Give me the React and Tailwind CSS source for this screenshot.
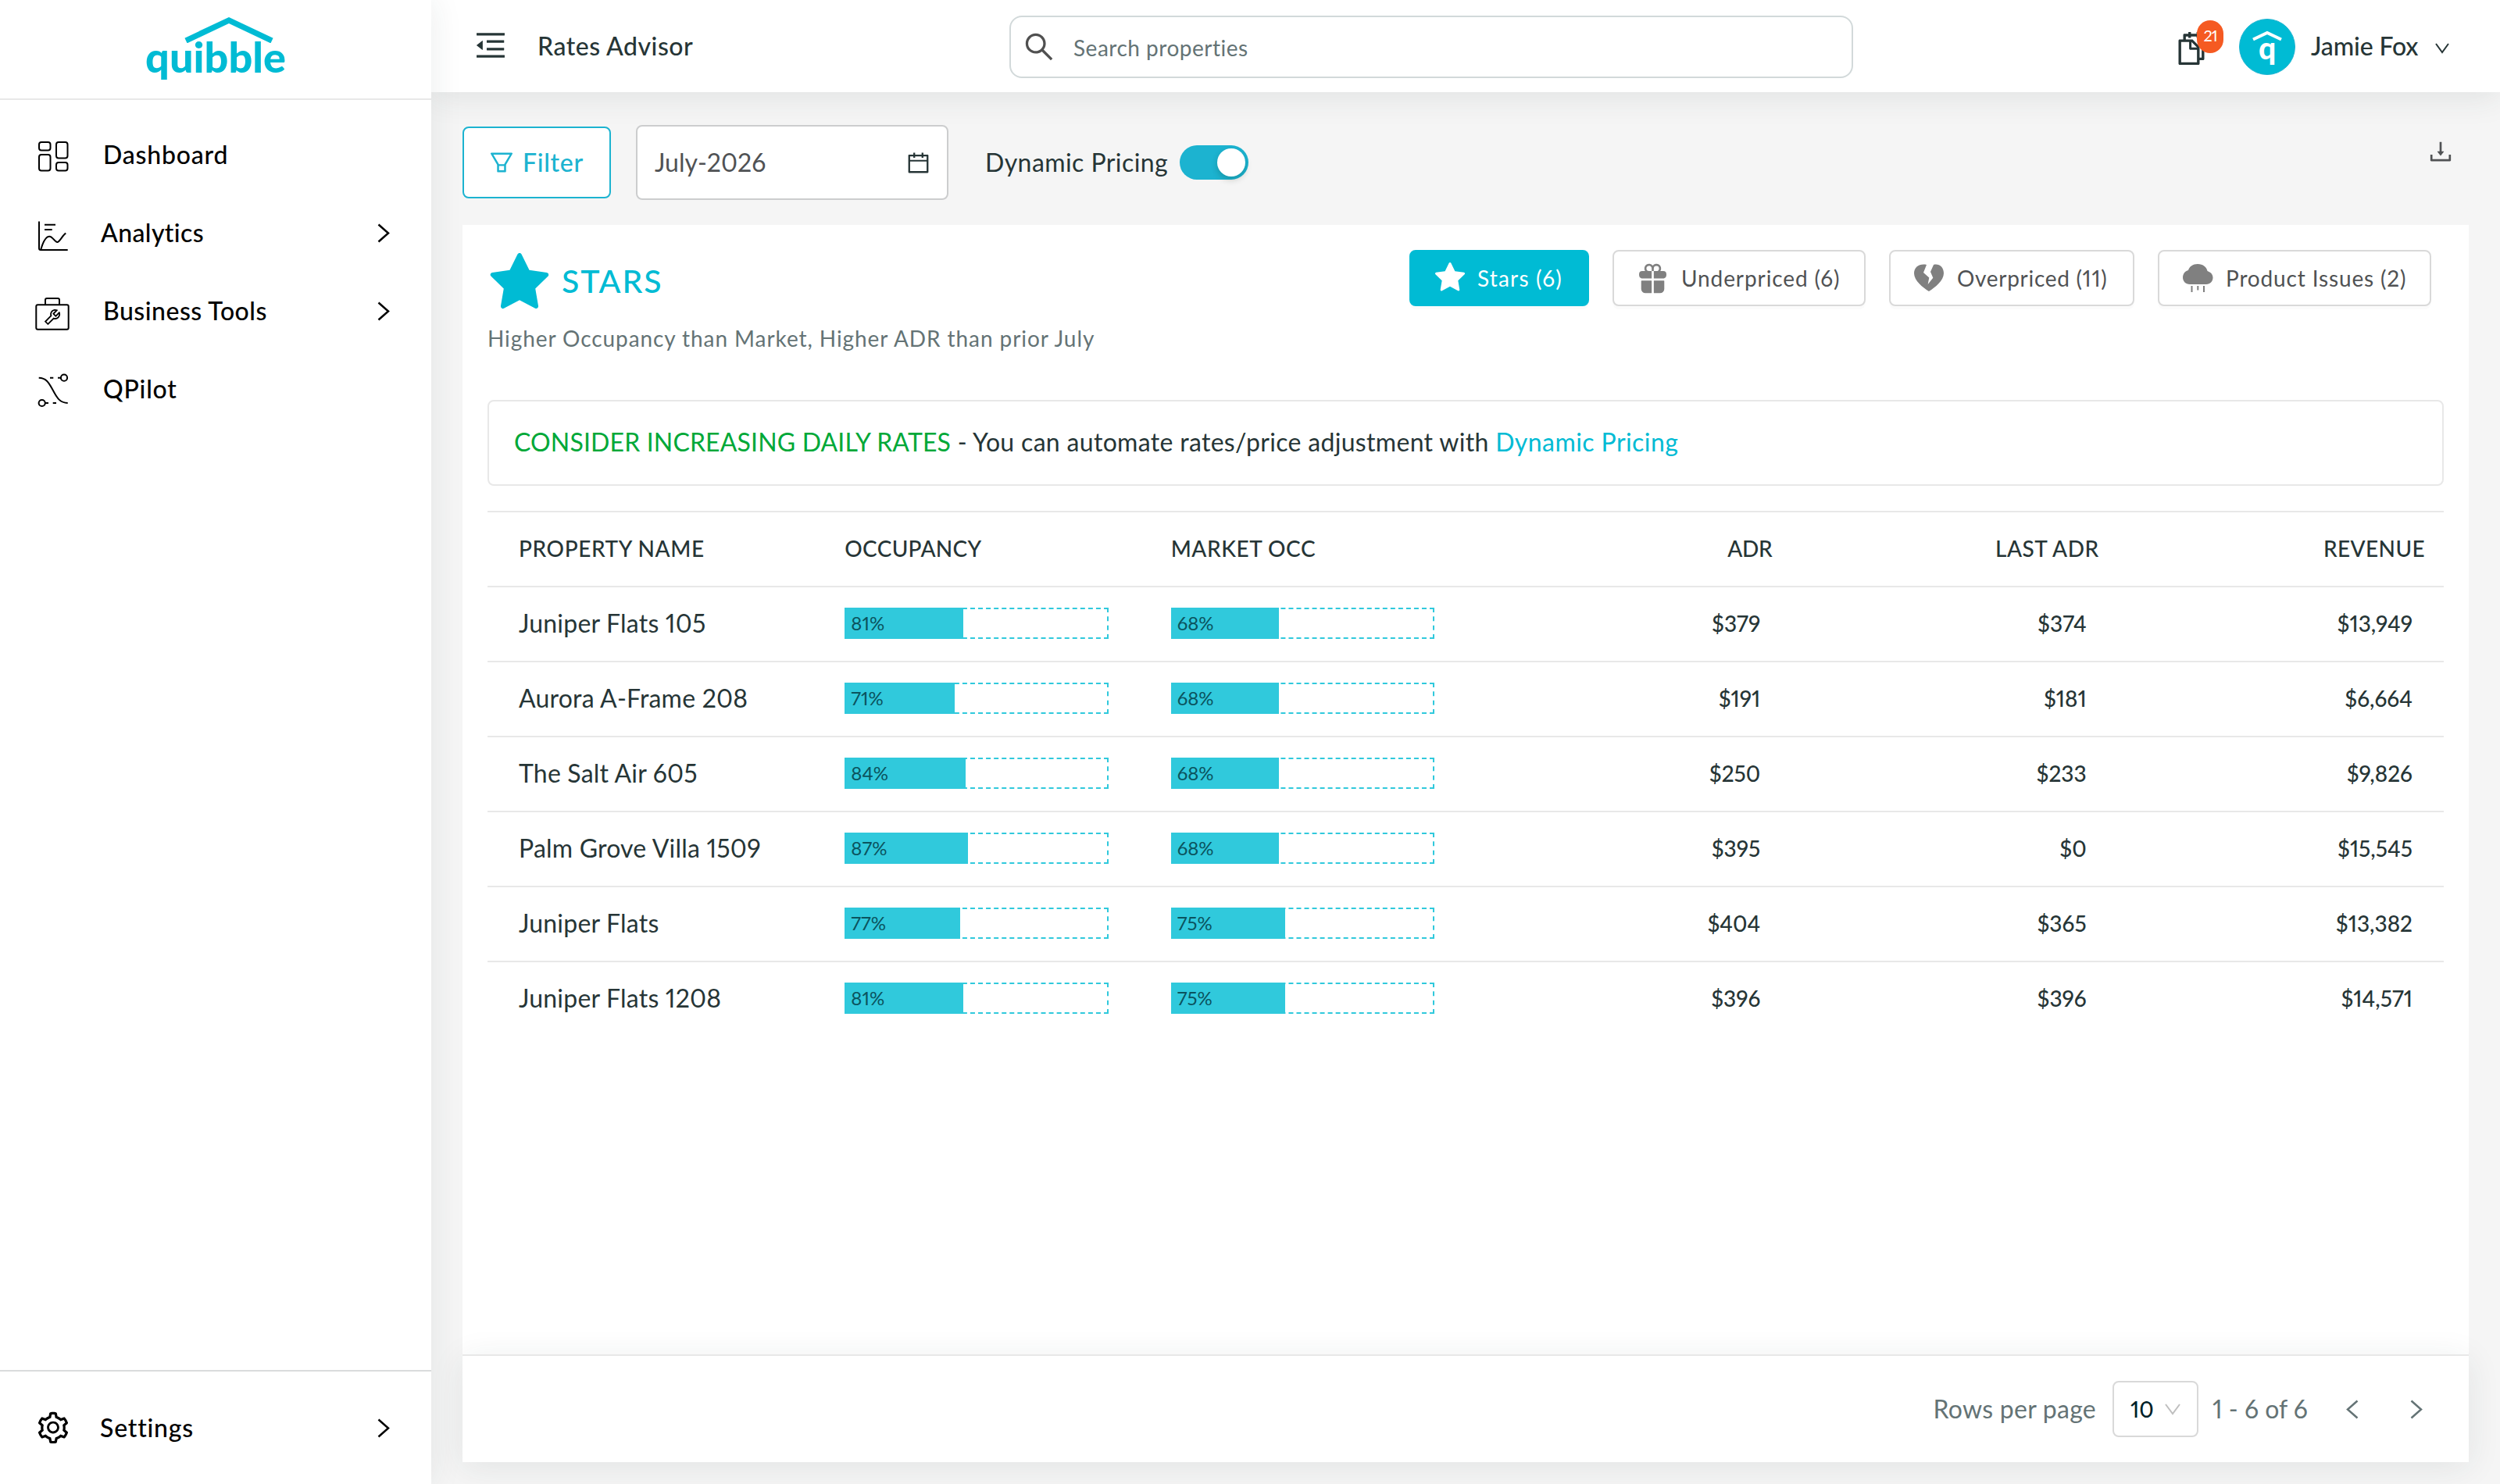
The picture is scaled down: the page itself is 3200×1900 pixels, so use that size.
import React, { useState } from "react";
import { AiFillStar, AiOutlineCalendar, AiOutlineDownload, AiOutlineFilter, AiOutlineMenuFold, AiOutlineSearch, AiOutlineSetting, AiOutlineSnippets, AiOutlineTool } from "react-icons/ai";
import { IoGift } from "react-icons/io5";

const properties = [
    { name: "Juniper Flats 105", occ: 81, market: 68, adr: "$379", lastAdr: "$374", revenue: "$13,949" },
    { name: "Aurora A-Frame 208", occ: 71, market: 68, adr: "$191", lastAdr: "$181", revenue: "$6,664" },
    { name: "The Salt Air 605", occ: 84, market: 68, adr: "$250", lastAdr: "$233", revenue: "$9,826" },
    { name: "Palm Grove Villa 1509", occ: 87, market: 68, adr: "$395", lastAdr: "$0", revenue: "$15,545" },
    { name: "Juniper Flats", occ: 77, market: 75, adr: "$404", lastAdr: "$365", revenue: "$13,382" },
    { name: "Juniper Flats 1208", occ: 81, market: 75, adr: "$396", lastAdr: "$396", revenue: "$14,571" },
];

const DashboardIcon = () => (
    <svg width="44" height="44" viewBox="0 0 44 44" fill="none" stroke="currentColor" strokeWidth="2" className="relative top-0.5">
        <rect x="4" y="4" width="14.5" height="10.5" rx="3" />
        <rect x="4" y="20" width="14.5" height="20.5" rx="3" />
        <rect x="26" y="4" width="14.5" height="20.5" rx="3" />
        <rect x="26" y="30" width="14.5" height="10.5" rx="3" />
    </svg>
);

const AnalyticsIcon = () => (
    <svg width="44" height="44" viewBox="0 0 44 44" fill="none" stroke="currentColor" strokeWidth="2" className="relative top-1">
        <path d="M4 3.5V38q0 2 2 2H40.7M11 7.7H25M11 14H20.7" />
        <path d="M6.3 39.5C9 30 12 22.7 17.3 22.7C21.5 22.7 24 30 27.3 30C30.5 30 34 21 38.3 18.7" />
    </svg>
);

const ToolboxIcon = () => (
    <svg width="46" height="46" viewBox="0 0 46 46" fill="none" stroke="currentColor" strokeWidth="2" className="relative top-[3px] -left-0.5 -mr-0.5">
        <rect x="2.3" y="12.3" width="41.4" height="31.4" rx="2" />
        <path d="M14 12V6q0-2 2-2H30q2 0 2 2V12" />
        <AiOutlineTool x="10" y="15" size={26} />
    </svg>
);

const QPilotIcon = () => (
    <svg width="44" height="44" viewBox="0 0 44 44" fill="none" stroke="currentColor" strokeWidth="2" className="relative top-0.5">
        <path d="M3.7 5.7C14 6 17 13 22 22C27 31 30 37.5 40.7 38" />
        <circle cx="36" cy="5.7" r="4.1" />
        <circle cx="7.7" cy="38" r="4.1" />
        <path d="M18 5.7h4.3M28 5.7h3.7M12 38h4M21.7 38h4.3" />
    </svg>
);

const BrokenHeart = () => (
    <svg width="38" height="36" viewBox="0 0 38 36" fill="currentColor">
        <path d="M16 1L12 11L19.3 17.5L17.7 26L24.3 17.7L21 10L25 1C32-.8 38 4 38 12C38 21 27 30 19 35C11 30 0 21 0 12C0 4 7-.8 16 1Z" />
    </svg>
);

const RainCloud = () => (
    <svg width="39" height="37" viewBox="0 0 39 37" fill="currentColor">
        <path d="M9 26C3.500 26 0 22 0 17C0 12.500 3 9 7 8C8.500 3 13 0 19 0C26 0 30.500 4 31.500 9C36 10.500 38.500 13.500 38.500 17.500C38.500 22 35 26 30 26Z" />
        <path d="M10.500 28h2v8h-2zM18.300 28h2v5.500h-2zM26 28h2v8h-2z" />
    </svg>
);

const Chevron = ({ d, w, h, className }) => (
    <svg width={w} height={h} viewBox={`0 0 ${w} ${h}`} fill="none" stroke="currentColor" className={className}>
        <path d={d} />
    </svg>
);
const right = "M1.500 1.500L14 12.500L1.500 23.500";
const left = "M14.500 1.500L2 12.500L14.500 23.500";

const navItems = [
    { label: "Dashboard", icon: <DashboardIcon />, cls: "ml-[42px] tracking-[0.8px]" },
    { label: "Analytics", icon: <AnalyticsIcon />, more: true, cls: "ml-[39px] tracking-[0.4px]" },
    { label: "Business Tools", icon: <ToolboxIcon />, more: true, cls: "ml-[42px] tracking-[0.5px]" },
    { label: "QPilot", icon: <QPilotIcon />, cls: "ml-[42px] tracking-[0.8px]" },
];

const NavItem = ({ label, icon, more, cls }) => (
    <div className="flex h-[100px] items-center pr-[53px] pl-[46px]">
        {icon}
        <span className={`text-[32px] font-medium ${cls}`}>{label}</span>
        {more && <Chevron d={right} w={16} h={25} className="ml-auto stroke-[2.5]" />}
    </div>
);

const Sidebar = () => (
    <aside className="z-20 flex h-full w-[552px] shrink-0 flex-col bg-white text-black shadow-[0_0_40px_rgba(37,56,60,0.09)]">
        <div className="flex h-32 flex-col items-center border-b-2 border-[#e8e8e8] pt-[21px] text-[#00bbd4]">
            <svg width="116" height="34" viewBox="0 0 116 34" fill="none" stroke="currentColor" strokeWidth="7.400" className="relative left-[17px]">
                <path d="M3 31L58 5L113 31" />
            </svg>
            <span className="-mt-[14px] text-[54px] leading-[64px] font-black">quibble</span>
        </div>
        <nav className="flex flex-1 flex-col pt-5">
            {navItems.map((item) => (
                <NavItem key={item.label} {...item} />
            ))}
        </nav>
        <div className="flex h-[146px] items-center border-t-2 border-[#dadbdc] pr-[53px] pl-[45px]">
            <AiOutlineSetting size={46} />
            <span className="ml-[37px] text-[32px] font-medium tracking-[0.8px]">Settings</span>
            <Chevron d={right} w={16} h={25} className="ml-auto stroke-[2.5]" />
        </div>
    </aside>
);

const Header = () => (
    <header className="z-10 flex h-[118px] w-full shrink-0 items-center bg-white text-[#263536] shadow-[0_6px_40px_rgba(37,56,60,0.1)]">
        <div className="flex w-[740px] items-center pl-[53px]">
            <AiOutlineMenuFold size={46} className="-mt-0.5" />
            <h1 className="ml-[37px] text-[32px] font-medium tracking-[0.5px]">Rates Advisor</h1>
        </div>
        <div className="mt-0.5 flex h-20 w-[1080px] items-center rounded-2xl border-2 border-[#d2d9da] pl-[14px]">
            <AiOutlineSearch size={44} className="text-[#505050]" />
            <span className="ml-[22px] pt-0.5 text-[28px] tracking-[0.5px] text-[#647375]">Search properties</span>
        </div>
        <div className="relative ml-[409px] pt-1.5">
            <AiOutlineSnippets size={48} />
            <span className="absolute -top-[6px] left-[31px] flex h-[42px] w-[34px] items-center justify-center rounded-[17px] bg-[#f55a22] pb-1 text-[20px] tracking-[-1px] text-white">21</span>
        </div>
        <div className="ml-[37px] mt-0.5 flex h-[72px] w-[72px] flex-col items-center rounded-full border-[1.5px] border-[#1cb3d0] bg-[#00bbd4] pt-[13px] text-white">
            <svg width="38" height="15" viewBox="0 0 38 15" fill="none" stroke="currentColor" strokeWidth="4">
                <path d="M1 12.500L19 4L37 12.500" />
            </svg>
            <span className="-mt-[12px] text-[39px] leading-[40px] font-black">q</span>
        </div>
        <span className="ml-5 text-[32px] font-medium tracking-[-0.13px]">Jamie Fox</span>
        <Chevron d="M1 1L9 12L17 1" w={18} h={14} className="mt-1.5 ml-[22px] stroke-2" />
    </header>
);

const Toolbar = () => (
    <div className="flex h-24 items-center text-[32px]">
        <button className="flex h-[92px] w-[190px] items-center rounded-lg border-2 border-[#1cb3d0] bg-white pl-[30px] font-medium text-[#1cb3d0]">
            <AiOutlineFilter size={36} />
            <span className="ml-[9px] tracking-[0.7px]">Filter</span>
        </button>
        <div className="ml-8 flex h-24 w-[400px] items-center justify-between rounded-lg border-2 border-[#cccdce] bg-white pr-5 pl-[22px] text-[#505254]">
            <span>July-2026</span>
            <AiOutlineCalendar size={33} className="text-[#263536]" />
        </div>
        <span className="ml-[47px] tracking-[0.43px] text-[#263536]">Dynamic Pricing</span>
        <div className="ml-[15px] flex h-11 w-[88px] items-center justify-end rounded-full bg-[#1cb3d0] pr-1">
            <div className="h-9 w-9 rounded-full bg-white shadow-[0_4px_8px_rgba(0,35,11,0.2)]"></div>
        </div>
        <AiOutlineDownload size={36} className="mr-[18px] mb-7 ml-auto text-[#505254]" />
    </div>
);

const tabs = [
    { id: "stars", label: "Stars (6)", icon: <AiFillStar size={46} />, cls: "w-[230px] pl-[27px] gap-[12px] tracking-[1.2px]" },
    { id: "under", label: "Underpriced (6)", icon: <IoGift size={43} />, cls: "w-[324px] pl-[28px] gap-[15px] tracking-[0.9px]" },
    { id: "over", label: "Overpriced (11)", icon: <BrokenHeart />, cls: "w-[314px] pl-[30px] gap-[17px] tracking-[0.7px]" },
    { id: "issues", label: "Product Issues (2)", icon: <RainCloud />, cls: "w-[350px] pl-[30px] gap-[16px] tracking-[0.85px]" },
];

const Bar = ({ value }) => (
    <div className="h-10 w-full border-2 border-dashed border-[#30c9dc]">
        <div
            className="-mt-0.5 -ml-0.5 flex h-10 items-center bg-[#30c9dc] pl-2 text-2xl text-[#0b535e]"
            style={{ width: Math.round((337.3 * value) / (value + 100)) + 1 }}
        >
            {value}%
        </div>
    </div>
);

const App = () => {
    const [active, setActive] = useState("stars");

    return (
        <div className="flex h-[1900px] w-[3200px] overflow-hidden bg-[#f5f5f5] font-['Lato',sans-serif] proportional-nums">
            <Sidebar />
            <div className="flex h-full flex-1 flex-col">
                <Header />
                <main className="flex flex-1 flex-col px-10 pt-[42px] pb-7">
                    <Toolbar />
                    <section className="mt-8 flex flex-1 flex-col bg-white">
                        <div className="flex flex-1 flex-col px-8 pt-8">
                            <div className="flex items-start justify-between">
                                <div>
                                    <div className="flex h-[78px] items-center text-[#00bbd4]">
                                        <AiFillStar size={90} className="mt-2 -ml-1" />
                                        <h2 className="ml-[9px] text-[41px] leading-none font-medium tracking-[1.9px]">STARS</h2>
                                    </div>
                                    <p className="mt-[17px] text-[28px] leading-[36px] tracking-[0.92px] text-[#647375]">Higher Occupancy than Market, Higher ADR than prior July</p>
                                </div>
                                <div className="mr-4 flex gap-[30px]">
                                    {tabs.map((tab) => (
                                        <button
                                            key={tab.id}
                                            onClick={() => setActive(tab.id)}
                                            className={`flex h-[72px] items-center rounded-lg border-2 text-[28px] whitespace-nowrap shadow-[0_4px_0_rgba(0,0,0,0.016)] ${tab.cls} ${active === tab.id ? "border-[#00bbd4] bg-[#00bbd4] text-white" : "border-[#d9d9d9] bg-white text-[#808080]"}`}
                                        >
                                            {tab.icon}
                                            <span className={active === tab.id ? "text-white" : "text-[#505254]"}>{tab.label}</span>
                                        </button>
                                    ))}
                                </div>
                            </div>
                            <div className="mt-[61px] flex h-[110px] items-center rounded-lg border-2 border-[#e8e8e8] pb-[3px] pl-8 text-[32px] whitespace-pre text-[#263536]">
                                <span className="tracking-[0.15px] text-[#00a838]">CONSIDER INCREASING DAILY RATES</span>
                                <span className="tracking-[0.32px]"> - You can automate rates/price adjustment with </span>
                                <a className="tracking-[0.43px] text-[#00bbd4]">Dynamic Pricing</a>
                            </div>
                            <div className="mt-8 flex flex-col text-[#263536]">
                                <div className="grid h-[98px] grid-cols-6 items-center border-y-2 border-[#e8e8e8] pb-[3px] text-[28px] font-medium">
                                    <span className="pl-10 tracking-[0.6px]">PROPERTY NAME</span>
                                    <span className="pl-10 tracking-[0.3px]">OCCUPANCY</span>
                                    <span className="pl-10 tracking-[0.55px]">MARKET OCC</span>
                                    <span className="pr-[25px] text-right tracking-[-0.3px]">ADR</span>
                                    <span className="pr-6 text-right tracking-[0.5px]">LAST ADR</span>
                                    <span className="pr-6 text-right tracking-[0.4px]">REVENUE</span>
                                </div>
                                {properties.map((row) => (
                                    <div key={row.name} className="grid h-24 grid-cols-6 items-center border-b-2 border-[#e8e8e8] pb-0.5 last:border-transparent">
                                        <span className="pl-10 text-[32px] whitespace-nowrap tracking-[0.2px]">{row.name}</span>
                                        <div className="px-10"><Bar value={row.occ} /></div>
                                        <div className="px-10"><Bar value={row.market} /></div>
                                        <span className="pr-10 text-right text-[28px] font-medium">{row.adr}</span>
                                        <span className="pr-10 text-right text-[28px] font-medium">{row.lastAdr}</span>
                                        <span className="pr-10 text-right text-[28px] font-medium">{row.revenue}</span>
                                    </div>
                                ))}
                            </div>
                        </div>
                        <footer className="flex h-[138px] items-center justify-end border-t-2 border-[#e8e8e8] bg-white pr-[59px] text-[32px] text-[#647375] shadow-[0_6px_40px_rgba(37,56,60,0.09)]">
                            <span className="tracking-[0.26px]">Rows per page</span>
                            <div className="ml-[21px] flex h-[72px] w-[110px] items-center rounded-lg border-2 border-[#d9d9d9] pl-[21px] text-[28px] font-medium text-[#001f29]">
                                <span className="w-[27px]">10</span>
                                <Chevron d="M1 1L10 13L19 1" w={20} h={15} className="ml-[17px] stroke-2 text-[#bfbfbf]" />
                            </div>
                            <span className="ml-[18px] w-[123px] whitespace-nowrap">1 - 6 of 6</span>
                            <Chevron d={left} w={16} h={25} className="ml-[48px] stroke-[2.5]" />
                            <Chevron d={right} w={16} h={25} className="ml-[66px] stroke-[2.5]" />
                        </footer>
                    </section>
                </main>
            </div>
        </div>
    );
};

export default App;
